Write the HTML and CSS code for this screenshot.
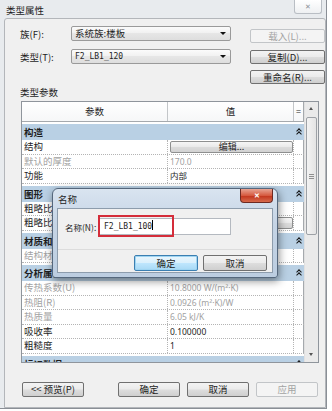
FILE: index.html
```html
<!DOCTYPE html>
<html lang="zh-CN">
<head>
    <meta charset="UTF-8">
    <title>类型属性</title>
    <link rel="stylesheet" href="styles.css">
</head>
<body>
    <div class="window">
        <div class="titlebar">
            <span class="title">类型属性</span>
            <div class="close">&#x2715;</div>
        </div>

        <div class="panel">
            <div class="top">
                <div class="fields">
                    <div class="field">
                        <span class="label">族(F):</span>
                        <div class="combo">系统族:楼板<span class="arrow"></span></div>
                    </div>
                    <div class="field">
                        <span class="label">类型(T):</span>
                        <div class="combo mono">F2_LB1_120<span class="arrow"></span></div>
                    </div>
                </div>
                <div class="side-btns">
                    <div class="btn disabled">载入(L)...</div>
                    <div class="btn">复制(D)...</div>
                    <div class="btn">重命名(R)...</div>
                </div>
            </div>

            <div class="section-label">类型参数</div>

            <div class="grid-box">
                <div class="grid">
                    <div class="head">
                        <div class="hcell">参数</div>
                        <div class="hcell">值</div>
                        <div class="hcell eq">=</div>
                    </div>

                    <div class="group first"><span>构造</span><span class="fold"></span></div>
                    <div class="row">
                        <div class="pcell">结构</div>
                        <div class="vcell"><div class="cell-btn">编辑...</div></div>
                        <div class="ecell"></div>
                    </div>
                    <div class="row ro">
                        <div class="pcell">默认的厚度</div>
                        <div class="vcell">170.0</div>
                        <div class="ecell"></div>
                    </div>
                    <div class="row">
                        <div class="pcell">功能</div>
                        <div class="vcell">内部</div>
                        <div class="ecell"></div>
                    </div>

                    <div class="group"><span>图形</span><span class="fold"></span></div>
                    <div class="row">
                        <div class="pcell">粗略比例填充样式</div>
                        <div class="vcell"></div>
                        <div class="ecell"></div>
                    </div>
                    <div class="row">
                        <div class="pcell">粗略比例填充颜色</div>
                        <div class="vcell"><div class="cell-btn">黑色</div></div>
                        <div class="ecell"></div>
                    </div>

                    <div class="group"><span>材质和装饰</span><span class="fold"></span></div>
                    <div class="row ro">
                        <div class="pcell">结构材质</div>
                        <div class="vcell">混凝土 - 现场浇注混凝土</div>
                        <div class="ecell"></div>
                    </div>

                    <div class="group"><span>分析属性</span><span class="fold"></span></div>
                    <div class="row ro">
                        <div class="pcell">传热系数(U)</div>
                        <div class="vcell">10.8000 W/(m²·K)</div>
                        <div class="ecell"></div>
                    </div>
                    <div class="row ro">
                        <div class="pcell">热阻(R)</div>
                        <div class="vcell">0.0926 (m²·K)/W</div>
                        <div class="ecell"></div>
                    </div>
                    <div class="row ro">
                        <div class="pcell">热质量</div>
                        <div class="vcell">6.05 kJ/K</div>
                        <div class="ecell"></div>
                    </div>
                    <div class="row">
                        <div class="pcell">吸收率</div>
                        <div class="vcell">0.100000</div>
                        <div class="ecell"></div>
                    </div>
                    <div class="row">
                        <div class="pcell">粗糙度</div>
                        <div class="vcell">1</div>
                        <div class="ecell"></div>
                    </div>

                    <div class="group"><span>标识数据</span><span class="fold"></span></div>
                </div>

                <div class="scrollbar">
                    <div class="sb-arrow up"></div>
                    <div class="thumb"><span class="grip"></span></div>
                    <div class="sb-arrow down"></div>
                </div>
            </div>

            <div class="footer">
                <div class="btn wide">&lt;&lt; 预览(P)</div>
                <div class="footer-right">
                    <div class="btn wide">确定</div>
                    <div class="btn wide">取消</div>
                    <div class="btn wide disabled">应用</div>
                </div>
            </div>
        </div>

        <!-- 弹出的"名称"对话框 -->
        <div class="name-dialog">
            <div class="nd-title">
                <span>名称</span>
                <div class="nd-close">&#x2715;</div>
            </div>
            <div class="nd-body">
                <div class="nd-row">
                    <span class="nd-label">名称(N):</span>
                    <div class="nd-input">F2_LB1_100<span class="caret"></span></div>
                    <div class="highlight"></div>
                </div>
                <div class="nd-buttons">
                    <div class="btn nd-btn default">确定</div>
                    <div class="btn nd-btn">取消</div>
                </div>
            </div>
        </div>
    </div>
</body>
</html>
```

FILE: styles.css
```css
* {
    box-sizing: border-box;
}
body {
    margin: 0;
    background: #fff;
    font-family: "Noto Sans CJK SC", "Liberation Sans", sans-serif;
    font-size: 9.5px;
    color: #1e1e1e;
}
.window {
    position: relative;
    width: 327px;
    height: 409px;
    background: #e8ebee;
    border-right: 1px solid #8a8f96;
    border-bottom: 1px solid #8a8f96;
    display: flex;
    flex-direction: column;
}
.titlebar {
    height: 18px;
    display: flex;
    align-items: flex-start;
    padding-left: 6px;
}
.title {
    margin-top: 4px;
    line-height: 12px;
}
.close {
    margin-left: auto;
    margin-right: 4px;
    width: 28px;
    height: 14px;
    background: linear-gradient(#ffffff, #eef0f2);
    border: 1px solid #b9bec4;
    border-top: none;
    border-radius: 0 0 3px 3px;
    color: #8b9096;
    font-size: 7px;
    line-height: 13px;
    text-align: center;
}
.panel {
    margin-left: 4px;
    width: 322px;
    height: 390px;
    background: #f0f0f0;
    border: 1px solid #b3b6ba;
    border-radius: 3px 3px 0 0;
    padding: 0 0 0 15px;
}
.top {
    height: 65px;
    padding-top: 7px;
    display: flex;
}
.fields {
    width: 223px;
    display: flex;
    flex-direction: column;
    gap: 8px;
}
.field {
    display: flex;
    align-items: center;
    height: 15px;
}
.label {
    width: 51px;
    line-height: 12px;
}
.combo {
    position: relative;
    width: 160px;
    height: 15px;
    border: 1px solid #9a9a9a;
    border-radius: 2px;
    background: linear-gradient(#fbfbfb, #f0f0f0 50%, #e6e6e6 50%, #dedede);
    padding-left: 3px;
    line-height: 13px;
}
.mono {
    font-family: "DejaVu Sans Mono", "Liberation Mono", monospace;
    font-size: 8px;
}
.arrow {
    position: absolute;
    right: 4px;
    top: 5px;
    border-left: 3px solid transparent;
    border-right: 3px solid transparent;
    border-top: 3px solid #111;
}
.side-btns {
    margin-left: 12px;
    margin-top: 3px;
    display: flex;
    flex-direction: column;
    gap: 6.5px;
}
.btn {
    width: 75px;
    height: 14px;
    border: 1px solid #707070;
    border-radius: 2px;
    background: linear-gradient(#f3f3f3, #ebebeb 48%, #dddddd 52%, #cfcfcf);
    text-align: center;
    line-height: 12px;
    color: #1e1e1e;
}
.btn.disabled {
    border-color: #c2c5c8;
    background: #f4f4f4;
    color: #a3a3a3;
}
.section-label {
    margin-top: 2px;
    line-height: 12px;
    height: 12px;
}
.grid-box {
    margin-top: 3px;
    margin-left: 1px;
    width: 298px;
    height: 262px;
    border: 1px solid #8f959c;
    background: #fff;
    display: flex;
    overflow: hidden;
}
.grid {
    width: 282px;
    font-size: 9.5px;
}
.head {
    height: 20px;
    display: grid;
    grid-template-columns: 146px 126px 10px;
    border-bottom: 1px solid #a5a9ad;
    background: linear-gradient(#ffffff, #f6f7f8);
    margin-bottom: 2px;
}
.hcell {
    text-align: center;
    line-height: 19px;
    border-right: 1px solid #c3c6c9;
}
.hcell.eq {
    border-right: 1px solid #a5a9ad;
    font-size: 9px;
}
.group {
    height: 16px;
    margin-top: 2px;
    background: #b9d0e4;
    display: flex;
    align-items: center;
    padding-left: 2px;
    font-weight: bold;
    line-height: 14px;
}
.group.first {
    margin-top: 0;
}
.fold {
    margin-left: auto;
    margin-right: 3px;
    width: 5px;
    height: 6px;
    background:
        linear-gradient(45deg, transparent 50%, transparent 50%);
    position: relative;
}
.fold::before,
.fold::after {
    content: "";
    position: absolute;
    left: 0;
    width: 3px;
    height: 3px;
    border-left: 1.3px solid #111;
    border-top: 1.3px solid #111;
    transform: translateX(1px) rotate(45deg);
}
.fold::before {
    top: 0;
}
.fold::after {
    top: 3px;
}
.row {
    height: 14.5px;
    display: grid;
    grid-template-columns: 146px 126px 10px;
    border-bottom: 1px dotted #b4b4b4;
    line-height: 13px;
}
.pcell {
    padding-left: 2px;
    border-right: 1px dotted #b4b4b4;
    white-space: nowrap;
    overflow: hidden;
}
.vcell {
    padding-left: 2px;
    border-right: 1px dotted #b4b4b4;
    font-family: "Noto Sans", "Noto Sans CJK SC", sans-serif;
    font-size: 8.5px;
    white-space: nowrap;
    overflow: hidden;
}
.ecell {
    border-right: 1px solid #a5a9ad;
}
.ro {
    color: #a2a2a2;
}
.cell-btn {
    margin: 1px 0 0 0;
    width: 123px;
    height: 12px;
    border: 1px solid #8e8f8f;
    border-radius: 2px;
    background: linear-gradient(#f6f6f6, #e9e9e9 50%, #dcdcdc 50%, #d2d2d2);
    text-align: center;
    line-height: 10px;
    font-family: "Noto Sans CJK SC", sans-serif;
    font-size: 9px;
    color: #1e1e1e;
}
.scrollbar {
    width: 14px;
    background: #eaeaea;
    border-left: 1px solid #e0e0e0;
    display: flex;
    flex-direction: column;
    align-items: center;
    position: relative;
}
.sb-arrow {
    height: 14px;
    width: 13px;
    position: relative;
}
.sb-arrow::after {
    content: "";
    position: absolute;
    left: 4px;
    border-left: 2.5px solid transparent;
    border-right: 2.5px solid transparent;
}
.sb-arrow.up::after {
    top: 5px;
    border-bottom: 3px solid #555;
}
.sb-arrow.down {
    margin-top: auto;
}
.sb-arrow.down::after {
    top: 5px;
    border-top: 3px solid #555;
}
.thumb {
    margin-top: 1px;
    width: 11px;
    height: 118px;
    border: 1px solid #9da1a6;
    border-radius: 2px;
    background: linear-gradient(90deg, #f3f3f3, #e4e4e4);
    display: flex;
    align-items: center;
    justify-content: center;
}
.grip {
    width: 5px;
    height: 5px;
    border-top: 1px solid #8f8f8f;
    border-bottom: 1px solid #8f8f8f;
    position: relative;
}
.grip::after {
    content: "";
    position: absolute;
    left: 0;
    right: 0;
    top: 1px;
    border-top: 1px solid #8f8f8f;
}
.footer {
    margin-top: 19px;
    margin-left: 2px;
    display: flex;
    width: 296px;
}
.btn.wide {
    width: 62px;
    height: 15px;
    line-height: 13px;
}
.footer-right {
    margin-left: auto;
    display: flex;
    gap: 7px;
}

/* 名称 dialog */
.name-dialog {
    position: absolute;
    left: 52px;
    top: 188px;
    width: 226px;
    height: 90px;
    border: 1px solid #55677c;
    border-radius: 6px 6px 3px 3px;
    background: linear-gradient(#d9e4f0, #c5d4e5 40%, #bccde0);
    box-shadow: 1px 3px 9px rgba(0, 0, 0, 0.45);
    padding: 0 4px 4px 4px;
    display: flex;
    flex-direction: column;
}
.nd-title {
    height: 19px;
    display: flex;
    align-items: flex-start;
    padding-left: 1px;
}
.nd-title span {
    margin-top: 4px;
    line-height: 12px;
}
.nd-close {
    margin-left: auto;
    width: 33px;
    height: 14px;
    border: 1px solid #6d2a22;
    border-top: none;
    border-radius: 0 0 4px 4px;
    background: linear-gradient(#e8a493, #d65a40 50%, #c2341c 52%, #d66a4c);
    color: #fff;
    font-size: 7px;
    font-weight: bold;
    text-align: center;
    line-height: 13px;
}
.nd-body {
    flex: 1;
    background: #f0f0f0;
    border: 1px solid #8d9cac;
    padding: 9px 5px 0 7px;
    display: flex;
    flex-direction: column;
}
.nd-row {
    position: relative;
    display: flex;
    align-items: center;
    height: 17px;
}
.nd-label {
    width: 34px;
    line-height: 12px;
    font-size: 8.5px;
}
.nd-input {
    width: 132px;
    height: 17px;
    background: #fff;
    border: 1px solid #b4b9c0;
    padding-left: 4px;
    font-family: "DejaVu Sans Mono", "Liberation Mono", monospace;
    font-size: 8px;
    line-height: 15px;
}
.caret {
    display: inline-block;
    width: 1px;
    height: 10px;
    background: #000;
    vertical-align: -1px;
}
.highlight {
    position: absolute;
    left: 33px;
    top: -3px;
    width: 76px;
    height: 22px;
    border: 2px solid #d42d3a;
}
.nd-buttons {
    margin-top: auto;
    margin-left: -7px;
    margin-right: -5px;
    padding: 5px 5px 1px 0;
    border-top: 1px solid #dcdcdc;
    display: flex;
    justify-content: flex-end;
    gap: 5px;
}
.btn.nd-btn {
    width: 64px;
    height: 16px;
    line-height: 14px;
}
.btn.default {
    border-color: #3c7fb1;
    box-shadow: inset 0 0 0 1px #9fd5f2;
    background: linear-gradient(#eaf6fd, #d9f0fc 50%, #bee6fd 52%, #a7d9f5);
}
```
